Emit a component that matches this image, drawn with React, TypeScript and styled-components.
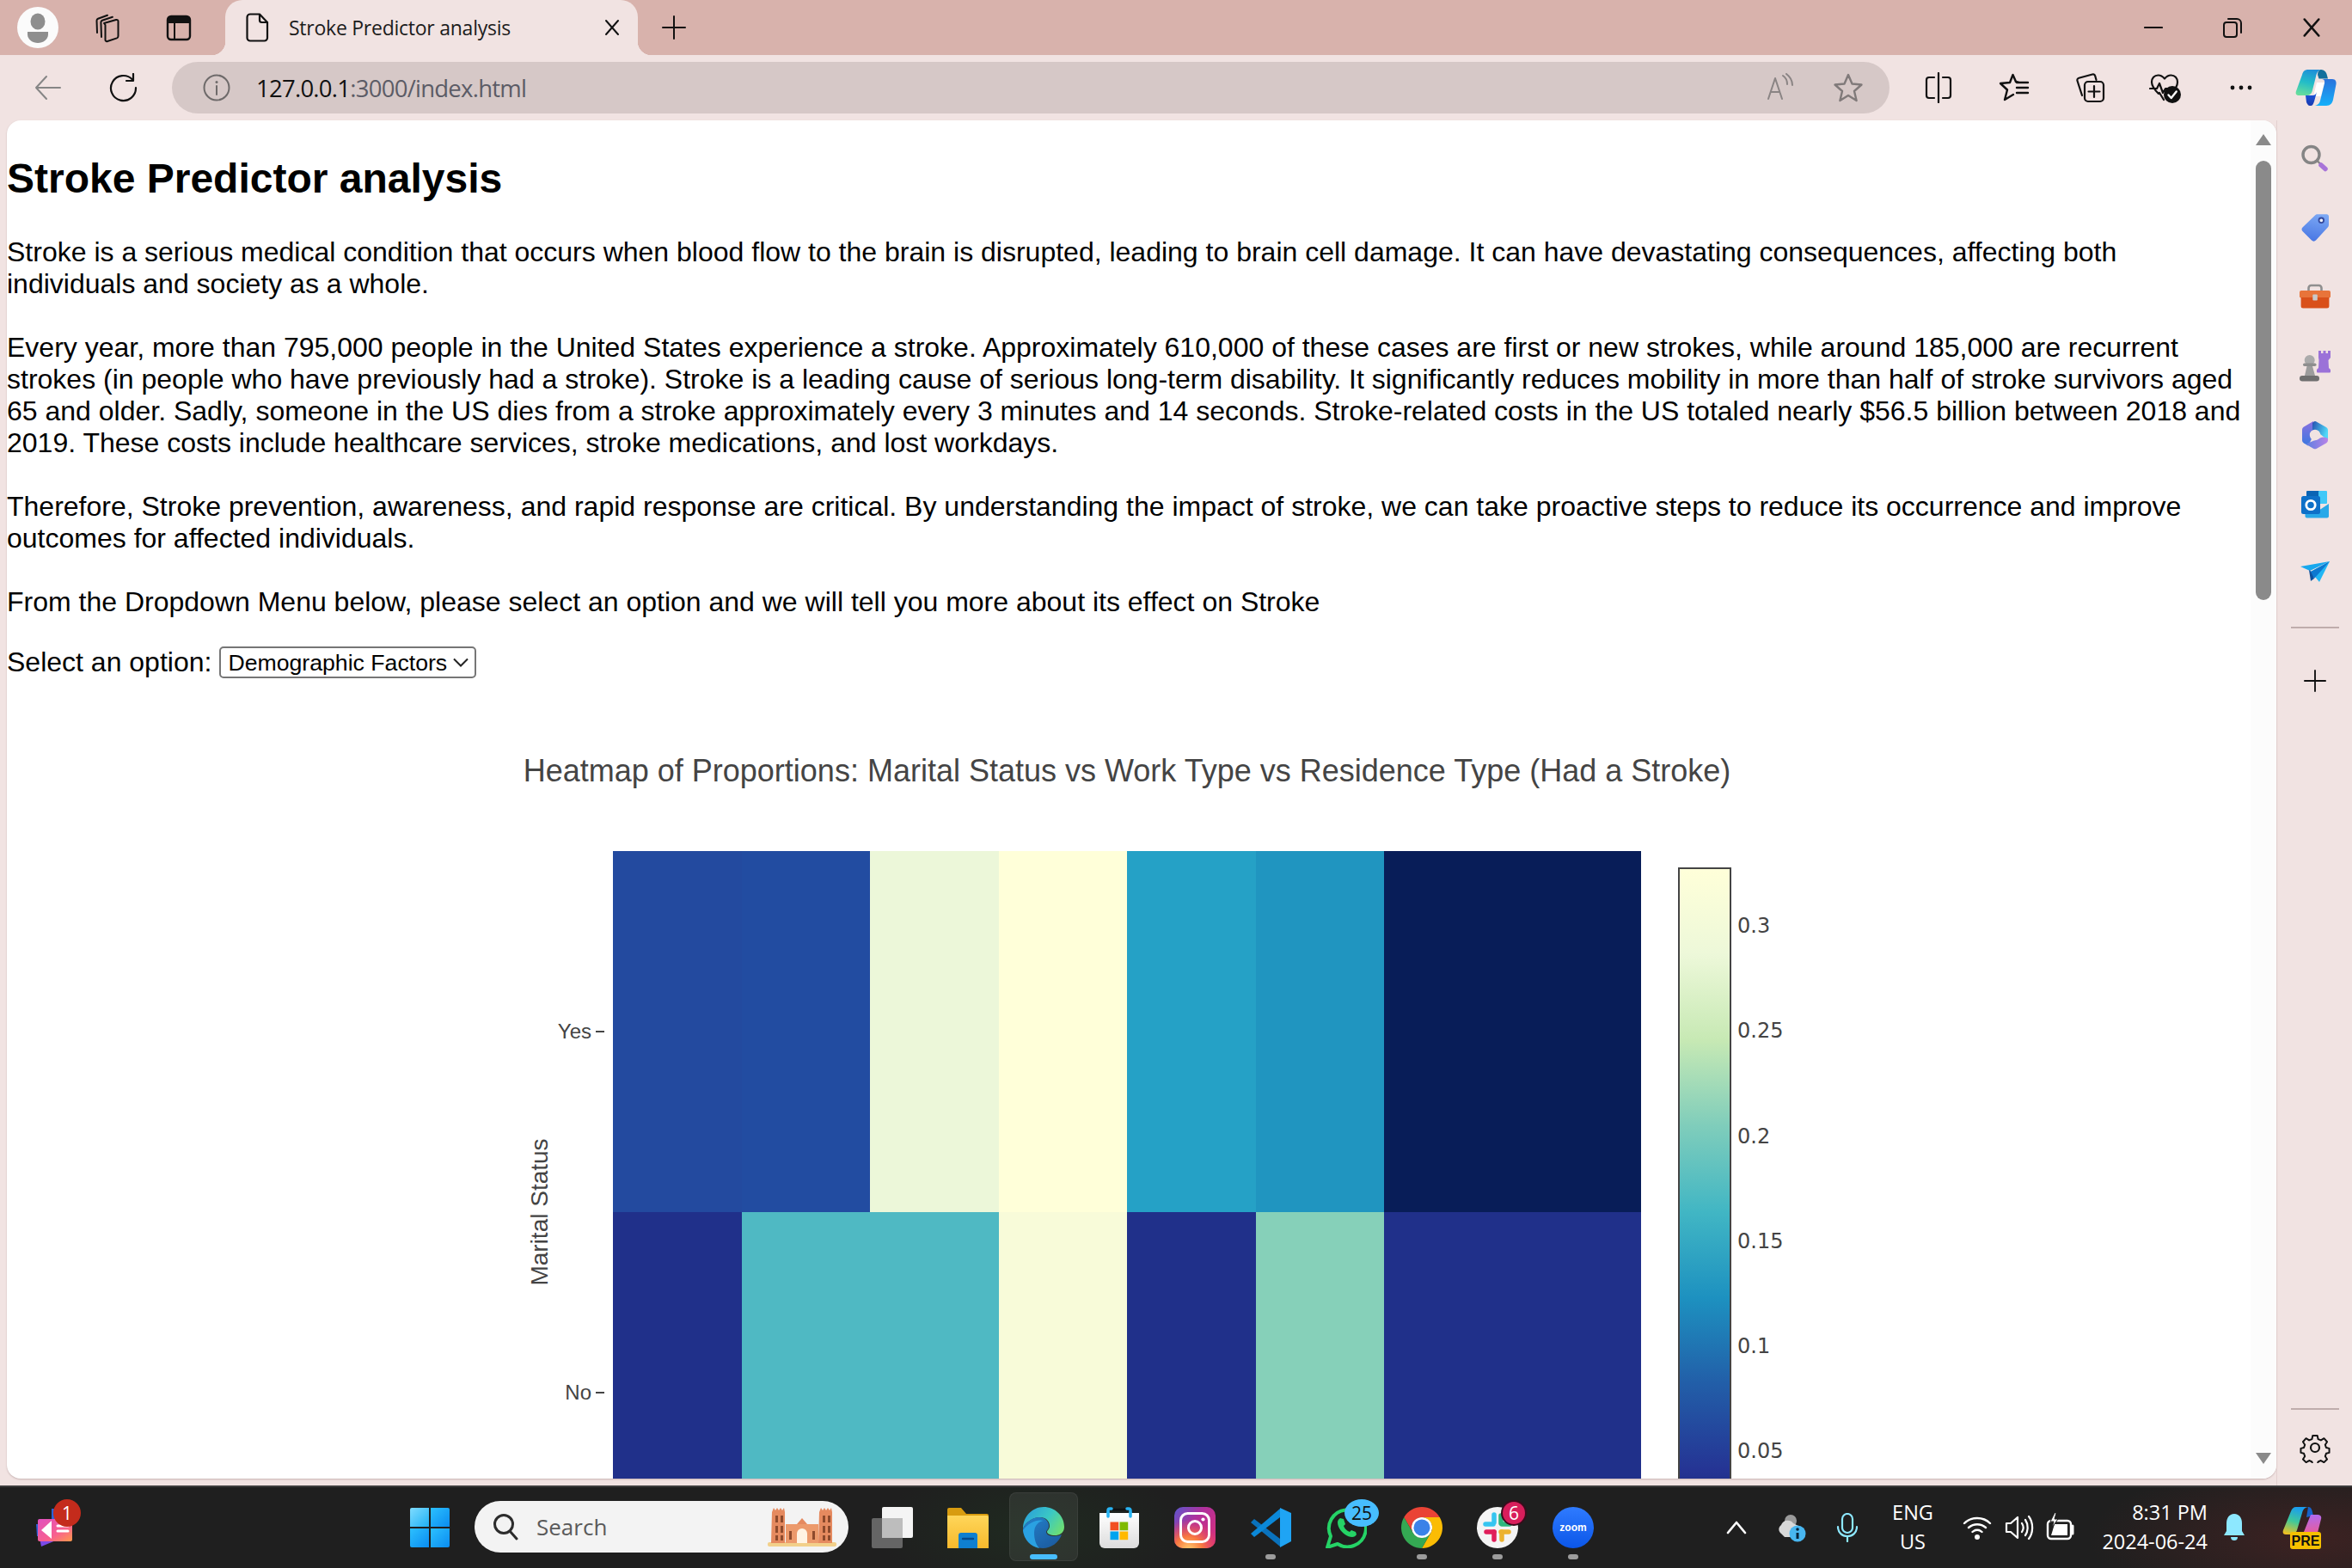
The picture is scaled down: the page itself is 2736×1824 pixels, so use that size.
import React from "react";
import styled, { createGlobalStyle } from "styled-components";

const Global = createGlobalStyle`
  html, body { margin: 0; padding: 0; overflow: hidden; background: #f1e3e2; }
  body { font-family: "Liberation Sans", Arial, sans-serif; }
  * { box-sizing: border-box; }
`;

const UI_FONT = `"Open Sans", "Noto Sans", sans-serif`;
const CHEVRON = `url("data:image/svg+xml,%3Csvg xmlns='http://www.w3.org/2000/svg' width='18' height='11' viewBox='0 0 18 11'%3E%3Cpath d='M1 1.500l8 8 8-8' fill='none' stroke='%23222' stroke-width='2'/%3E%3C/svg%3E")`;

const Shell = styled.div`
  width: 2736px; height: 1824px; display: flex; flex-direction: column; overflow: hidden; background: #f1e3e2;
`;
const TitleBar = styled.header`
  height: 64px; flex: none; display: flex; align-items: center; background: #d8b2ac;
`;
const Slot = styled.div<{ $w: number; $ml?: number }>`
  width: ${(p) => p.$w}px; margin-left: ${(p) => p.$ml ?? 0}px; flex: none; height: 100%;
  display: flex; align-items: center; justify-content: center; position: relative;
`;
const Tab = styled.div`
  width: 480px; height: 64px; margin-left: 6px; flex: none; display: flex; align-items: center;
  padding: 0 20px 0 21px; background: #f1e3e2; border-radius: 20px 20px 0 0; position: relative;
  &::before, &::after { content: ""; position: absolute; bottom: 0; width: 16px; height: 16px; }
  &::before { left: -16px; background: radial-gradient(circle at 0 0, transparent 16px, #f1e3e2 16.5px); }
  &::after { right: -16px; background: radial-gradient(circle at 100% 0, transparent 16px, #f1e3e2 16.5px); }
`;
const TabTitle = styled.span`
  font: 400 23px ${UI_FONT}; color: #1c1c1c; margin-left: 19px; white-space: nowrap; flex: 1; letter-spacing: -0.25px;
`;
const WindowControls = styled.div`
  margin-left: auto; display: flex; height: 100%; padding-right: 1px;
`;
const Toolbar = styled.nav`
  height: 76px; flex: none; display: flex; align-items: center; padding-left: 12px; background: #f1e3e2;
`;
const AddressBar = styled.div`
  flex: 1; height: 60px; margin: 0 13px 0 12px; border-radius: 30px; background: #d6c8c7;
  display: flex; align-items: center; padding-left: 35px; padding-right: 9px;
`;
const Url = styled.div`
  font: 400 27.5px ${UI_FONT}; color: #5c5c66; margin-left: 29px; flex: 1; white-space: nowrap; letter-spacing: -0.75px;
`;
const UrlHost = styled.span` color: #111; `;
const Main = styled.div`
  flex: 1; min-height: 0; display: flex;
`;
const Card = styled.main`
  flex: 1; min-width: 0; margin: 0 0 8px 8px; display: flex; overflow: hidden; background: #fff;
  border-radius: 16px; box-shadow: 0 1px 2px rgba(120, 90, 90, 0.35);
`;
const Page = styled.div`
  flex: 1; min-width: 0; overflow: hidden; color: #000; font: 400 32px/37px "Liberation Sans", Arial, sans-serif;
`;
const Heading = styled.h2`
  margin: 40px 0; font: 700 48px/55px "Liberation Sans", Arial, sans-serif;
`;
const Para = styled.p<{ $mb?: number }>`
  margin: 0 0 ${(p) => p.$mb ?? 37}px;
`;
const SelectRow = styled.div`
  display: flex; align-items: center; height: 37px;
`;
const Dropdown = styled.select`
  appearance: none; margin-left: 9px; width: 299px; height: 37px; font: 400 26.67px "Liberation Sans", Arial, sans-serif;
  color: #000; background: #fff ${CHEVRON} no-repeat right 7px center; border: 2px solid #767676; border-radius: 5px;
  padding: 0 0 0 8px;
`;
const Chart = styled.svg`
  display: block; margin-top: 11px;
`;
const Rail = styled.aside`
  width: 30px; flex: none; background: #fcfcfc; display: flex; flex-direction: column;
  padding: 16px 6px 17px;
`;
const Thumb = styled.div`
  height: 511px; margin-top: 18px; border-radius: 9px; background: #8a8a8a; flex: none;
`;
const RailArrow = styled.svg<{ $end?: boolean }>`
  display: block; flex: none; margin-top: ${(p) => (p.$end ? "auto" : "0")};
`;
const Sidebar = styled.aside`
  width: 88px; flex: none; display: flex; flex-direction: column; align-items: center; padding: 4px 0 4px;
  border-left: 1px solid #e2d0cf;
`;
const SideSlot = styled.div`
  width: 100%; height: 80.5px; flex: none; display: flex; align-items: center; justify-content: center;
`;
const SideRule = styled.div<{ $auto?: boolean }>`
  width: 56px; height: 2px; flex: none; background: #bfadac;
  margin-top: ${(p) => (p.$auto ? "auto" : "21px")}; margin-bottom: ${(p) => (p.$auto ? "4px" : "21px")};
`;
const Taskbar = styled.footer`
  height: 96px; flex: none; display: flex; align-items: stretch; border-top: 2px solid #3c3c3c; color: #fff;
  background:
    radial-gradient(ellipse 260px 90px at 2690px 60px, #3d2222 0%, transparent 100%),
    radial-gradient(ellipse 180px 80px at 1200px 50px, #1f2a20 0%, transparent 100%),
    #1f1f1f;
`;
const SearchPill = styled.div`
  width: 435px; height: 60px; margin: 16px 7px 0 8px; border-radius: 30px; background: #f3f3f3; flex: none;
  display: flex; align-items: center; padding: 0 14px 0 20px;
`;
const SearchLabel = styled.span`
  font: 400 26px ${UI_FONT}; color: #5a5a5a; margin-left: 20px; flex: 1;
`;
const ActiveTile = styled.div`
  position: absolute; left: 0; top: 6px; width: 80px; height: 80px; margin-left: 4px; border-radius: 8px;
  background: rgba(255, 255, 255, 0.07); border: 1px solid rgba(255, 255, 255, 0.06);
`;
const RunDot = styled.div<{ $active?: boolean }>`
  position: absolute; bottom: 10px; left: 50%; transform: translateX(-50%); height: 6px; border-radius: 3px;
  width: ${(p) => (p.$active ? 32 : 12)}px; background: ${(p) => (p.$active ? "#47bdff" : "#9c9c9c")};
`;
const Badge = styled.div<{ $bg: string; $fg: string; $w: number; $h: number; $x: number; $y: number; $halo?: boolean }>`
  position: absolute; left: 50%; top: 50%; width: ${(p) => p.$w}px; height: ${(p) => p.$h}px;
  margin-left: ${(p) => p.$x - p.$w / 2}px; margin-top: ${(p) => p.$y - p.$h / 2}px; border-radius: 50%;
  background: ${(p) => p.$bg}; color: ${(p) => p.$fg}; font: 400 21px ${UI_FONT};
  box-shadow: ${(p) => (p.$halo ? "0 0 0 2px #3a0c1c" : "none")};
  display: flex; align-items: center; justify-content: center;
`;
const Tray = styled.div`
  margin-left: auto; display: flex; padding-right: 8px; flex: none;
`;
const TwoLine = styled.div<{ $align: string; $w: number }>`
  width: ${(p) => p.$w}px; flex: none; display: flex; flex-direction: column; justify-content: center; gap: 5px;
  padding-bottom: 2px; align-items: ${(p) => p.$align}; font: 400 23.5px/29px ${UI_FONT}; color: #fff; white-space: nowrap;
`;

const Svg = ({ s = 32, vb = 32, children }: { s?: number; vb?: number; children: React.ReactNode }) => (
  <svg width={s} height={s} viewBox={`0 0 ${vb} ${vb}`} fill="none" strokeLinecap="round" strokeLinejoin="round">{children}</svg>
);

/* chrome icons */
const Profile = () => (
  <Svg s={48} vb={48}>
    <circle cx="24" cy="24" r="24" fill="#fbfbfb" />
    <ellipse cx="24" cy="17" rx="8.5" ry="9.5" fill="#8e8e8e" />
    <path d="M12 29h24v3c0 6-6 10-12 10s-12-4-12-10z" fill="#8e8e8e" />
  </Svg>
);
const Workspaces = () => (
  <Svg s={36} vb={36}>
    <g stroke="#111" strokeWidth="2">
      <path d="M15 13l14-4c1.500-.4 2.500.4 2.500 1.800V28c0 1.200-.5 2-1.600 2.400L19 34c-1.500.5-2.500-.4-2.500-1.800V15z" />
      <path d="M12 29l-.6-17c0-1 .5-1.800 1.500-2.200l12-4" />
      <path d="M7 24l-.5-14c0-1 .5-1.800 1.500-2.200l11-4" />
    </g>
  </Svg>
);
const TabActions = () => (
  <Svg s={32} vb={32}>
    <rect x="3" y="3" width="26" height="27" rx="4" stroke="#111" strokeWidth="2.4" />
    <path d="M3 7a4 4 0 0 1 4-4h18a4 4 0 0 1 4 4v4H3z" fill="#111" />
    <path d="M11 11v19" stroke="#111" strokeWidth="2" />
  </Svg>
);
const Doc = () => (
  <Svg s={34} vb={34}>
    <path d="M8 1.500h11l9 9.500v18a3.500 3.500 0 0 1-3.500 3.500h-16.500A3.500 3.500 0 0 1 4.500 29V5A3.500 3.500 0 0 1 8 1.500z" stroke="#111" strokeWidth="2.2" />
    <path d="M19 2v6.500a2.500 2.500 0 0 0 2.500 2.500H28" stroke="#111" strokeWidth="2.2" />
  </Svg>
);
const CloseX = ({ s = 20 }: { s?: number }) => (
  <Svg s={s} vb={20}>
    <path d="M3 2l14 16M17 2L3 18" stroke="#111" strokeWidth="2" />
  </Svg>
);
const Plus = ({ s = 28, c = "#111" }: { s?: number; c?: string }) => (
  <Svg s={s} vb={28}>
    <path d="M14 1v26M1 14h26" stroke={c} strokeWidth="2" />
  </Svg>
);
const Minimize = () => (
  <Svg s={22} vb={22}><path d="M1 11h20" stroke="#111" strokeWidth="2.200" /></Svg>
);
const Restore = () => (
  <Svg s={24} vb={24}>
    <rect x="2" y="6" width="15" height="17" rx="3" stroke="#111" strokeWidth="2" />
    <path d="M7 2h10a5 5 0 0 1 5 5v11" stroke="#111" strokeWidth="2" />
  </Svg>
);
const Back = () => (
  <Svg s={34} vb={34}>
    <path d="M31 17H3M15 4L3 17l12 13" stroke="#868686" strokeWidth="2" />
  </Svg>
);
const Refresh = () => (
  <Svg s={34} vb={34}>
    <path d="M27 7.500A14.500 14.500 0 1 0 31 17" stroke="#111" strokeWidth="2.200" />
    <path d="M28 1v8h-8" stroke="#111" strokeWidth="2.200" />
  </Svg>
);
const Info = () => (
  <Svg s={34} vb={34}>
    <circle cx="17" cy="17" r="14.500" stroke="#6e6a6a" strokeWidth="2" />
    <circle cx="17" cy="10.500" r="1.500" fill="#6e6a6a" />
    <path d="M17 15v10" stroke="#6e6a6a" strokeWidth="2" />
  </Svg>
);
const ReadAloud = () => (
  <Svg s={34} vb={34}>
    <g stroke="#8a8484" strokeWidth="2">
      <path d="M3 30L11 6l8 24M6 22h10" />
      <path d="M20 3c3 2 5 6 5 10M24 1c4 3 7 8 7 13" />
    </g>
  </Svg>
);
const Star = () => (
  <Svg s={36} vb={36}>
    <path d="M18 3l4.500 10.500 11 1-8.500 7.500 2.600 11L18 27l-9.600 6 2.600-11-8.500-7.500 11-1z" stroke="#807a7a" strokeWidth="2.400" />
  </Svg>
);
const Split = () => (
  <Svg s={36} vb={36}>
    <g stroke="#111" strokeWidth="2.200">
      <path d="M13 6H7a3 3 0 0 0-3 3v18a3 3 0 0 0 3 3h6" />
      <path d="M23 6h6a3 3 0 0 1 3 3v18a3 3 0 0 1-3 3h-6" />
      <path d="M18 1v34" />
    </g>
  </Svg>
);
const Favorites = () => (
  <Svg s={36} vb={36}>
    <g stroke="#111" strokeWidth="2.400">
      <path d="M20 11l-3.500-8L13 12 2 13l8 7.500L7 32l10-6" />
      <path d="M20 11l4 1M21 18h13M21 12h13M21 24h13" />
    </g>
  </Svg>
);
const Collections = () => (
  <Svg s={36} vb={36}>
    <g stroke="#111" strokeWidth="2.200">
      <path d="M9 27L3.500 10c-.5-1.500.3-2.800 1.800-3.200L21 2.500c1.500-.4 2.800.3 3.200 1.800L25.500 9" />
      <rect x="12" y="11" width="22" height="23" rx="4" fill="#f1e3e2" />
      <path d="M23 16v13M16.500 22.500h13" />
    </g>
  </Svg>
);
const Health = () => (
  <Svg s={38} vb={38}>
    <path d="M11 26C6 21 3 17 3 12.500 3 8 6 4.500 10.500 4.500c3 0 5.500 1.600 7.500 4 2-2.400 4.500-4 7.500-4C30 4.500 33 8 33 12.500c0 2-.6 4-1.700 6" stroke="#111" strokeWidth="2.200" />
    <path d="M1 20h8l3-6 4 11 3-5 3 0M12 25l5 8" stroke="#111" strokeWidth="2.200" />
    <circle cx="27" cy="27" r="10" fill="#111" />
    <path d="M22.500 27.500l3.200 3.500 6-7.500" stroke="#fff" strokeWidth="2.400" />
  </Svg>
);
const Dots = () => (
  <Svg s={28} vb={28}>
    <circle cx="4" cy="14" r="2.400" fill="#111" /><circle cx="14" cy="14" r="2.400" fill="#111" /><circle cx="24" cy="14" r="2.400" fill="#111" />
  </Svg>
);
const CopilotEdge = () => (
  <Svg s={48} vb={48}>
    <defs>
      <linearGradient id="cpA" x1="0.6" y1="0" x2="0.35" y2="1"><stop offset="0" stopColor="#1e8fd8" /><stop offset="0.5" stopColor="#22bcc8" /><stop offset="1" stopColor="#66dd9c" /></linearGradient>
      <linearGradient id="cpB" x1="0.5" y1="0" x2="0.5" y2="1"><stop offset="0" stopColor="#2a72dc" /><stop offset="1" stopColor="#14b0fa" /></linearGradient>
      <linearGradient id="cpC" x1="0.5" y1="0" x2="0.5" y2="1"><stop offset="0" stopColor="#1a58e0" /><stop offset="1" stopColor="#1a3ab0" /></linearGradient>
    </defs>
    <path d="M25 18h9l-4 16h-9z" fill="#fff" />
    <path d="M29 3c3 0 6 1 7.500 5L38 13.500H27.500L26 9c0-3 1-5 3-6z" fill="#126f9c" />
    <path d="M12 33h8c2 0 4-1 5-4l-3 11c-1 3-2 5-4 5h-1c-2 0-3-2-4-4z" fill="url(#cpC)" />
    <path d="M15 3h15c-4 1-5 4-6 8l-4 16c-1 4-3 6-7 6H5c-4 0-5-2-4-5L8 9c1-4 3-6 7-6z" fill="url(#cpA)" />
    <path d="M31 14h12c4 0 5 3 4.500 6L44 38c-1 4-3 7-8 7H21c4 0 7-2 8-6l5-20c.5-2 0-5-3-5z" fill="url(#cpB)" />
  </Svg>
);

/* sidebar icons */
const SideSearch = () => (
  <Svg s={36} vb={36}>
    <circle cx="13.500" cy="14" r="9.500" stroke="#858585" strokeWidth="3.400" />
    <path d="M20.500 21l3 3" stroke="#858585" strokeWidth="2.400" />
    <path d="M25 26l5 4.500" stroke="#a874d8" strokeWidth="5.500" />
  </Svg>
);
const SideTag = () => (
  <Svg s={36} vb={36}>
    <defs><linearGradient id="tagG" x1="0.5" y1="1" x2="0.7" y2="0"><stop offset="0" stopColor="#4a78e4" /><stop offset="1" stopColor="#7ca8f4" /></linearGradient></defs>
    <path d="M3.500 17.500L18 3.500c.8-.8 1.700-1.300 3-1.300h10.500c1.500 0 2.500 1 2.500 2.500V14.500c0 1.200-.4 2.200-1.200 3L19 32.500c-1.500 1.500-3.500 1.500-5 0L3.500 22c-1.300-1.300-1.300-3.200 0-4.500z" fill="url(#tagG)" />
    <circle cx="25.300" cy="9.300" r="2.800" fill="#eef2fc" stroke="#34489c" strokeWidth="1.800" />
  </Svg>
);
const SideCase = () => (
  <Svg s={36} vb={36}>
    <path d="M10.500 12V8a3 3 0 0 1 3-3h9a3 3 0 0 1 3 3v4" stroke="#8f8f8f" strokeWidth="2.600" />
    <path d="M0 13a2 2 0 0 1 2-2h32a2 2 0 0 1 2 2v5.500l-1.500 1H1.500L0 18.500z" fill="#e8743a" />
    <path d="M1.600 19h32.800v10a2.500 2.500 0 0 1-2.500 2.500H4.100A2.500 2.500 0 0 1 1.600 29z" fill="#d9501a" />
    <rect x="15.300" y="15.500" width="5.500" height="7" rx="1" fill="#c9c9c9" />
  </Svg>
);
const SideChess = () => (
  <Svg s={38} vb={38}>
    <path d="M23 1h3v3h2.500V1h3v3H34V1h3v8l-2.500 3 .5 9 2 2v2.500a1 1 0 0 1-1 1H22a1 1 0 0 1-1-1V23l2-2 .5-9L23 9z" fill="#9b72d8" />
    <circle cx="12.700" cy="12" r="6" fill="#ababab" />
    <rect x="5" y="15.500" width="15.500" height="3.500" rx="1.700" fill="#8e8e8e" />
    <path d="M9.500 19h6.500l3 11H7z" fill="#9c9c9c" />
    <rect x="1" y="30" width="23" height="6.500" rx="3.200" fill="#6f6f6f" />
  </Svg>
);
const SideM365 = () => (
  <Svg s={36} vb={36}>
    <defs>
      <linearGradient id="msA" x1="0.5" y1="0" x2="0.5" y2="1"><stop offset="0" stopColor="#8a70e0" /><stop offset="1" stopColor="#3a78e0" /></linearGradient>
      <linearGradient id="msB" x1="0" y1="0" x2="1" y2="0.4"><stop offset="0" stopColor="#2450b0" /><stop offset="1" stopColor="#50d8f8" /></linearGradient>
      <linearGradient id="msC" x1="0" y1="0" x2="1" y2="0"><stop offset="0" stopColor="#5a7fe0" /><stop offset="1" stopColor="#b883e8" /></linearGradient>
    </defs>
    <path d="M16 2L5 8.500C3.700 9.300 3 10.500 3 12v12c0 1.500.7 2.700 2 3.500l5 3 6-12V2z" fill="url(#msA)" />
    <path d="M15 4l2-1.700a2 2 0 0 1 2 0l12 6.700c1.300.8 2 2 2 3.500V24l-9-7-9-5z" fill="url(#msB)" />
    <path d="M33 22v2c0 1.500-.7 2.700-2 3.500L20 33.800c-1.300.7-2.700.7-4 0L7 28.500l10-4 7-3c3-1.500 6-1 9 .5z" fill="url(#msC)" />
    <circle cx="18" cy="18" r="6.200" fill="#f1e3e2" />
  </Svg>
);
const SideOutlook = () => (
  <Svg s={36} vb={36}>
    <rect x="8" y="2" width="16" height="15" rx="1" fill="#0a64b4" />
    <rect x="22" y="2" width="10" height="15" rx="1" fill="#3fc8f8" />
    <rect x="8" y="15" width="14" height="10" fill="#1590d8" />
    <path d="M6.500 19l14 7 13.500-9v14.500c0 1-1 2-2 2H8.500c-1 0-2-1-2-2z" fill="#28a8e8" />
    <rect x="2" y="8" width="22" height="21" rx="2.500" fill="#0e70c8" />
    <circle cx="13" cy="18.500" r="5.200" stroke="#fff" strokeWidth="2.800" />
  </Svg>
);
const SideSend = () => (
  <Svg s={36} vb={36}>
    <path d="M1 10l34-6-23 11z" fill="#18a8ee" />
    <path d="M35 4L23 28 13 16z" fill="#21b6f4" />
    <path d="M11 14l4 3 2 7-4 3z" fill="#0d4f9c" />
    <path d="M35 4L13 16l4 8z" fill="#0c78d0" />
  </Svg>
);
const Gear = () => (
  <Svg s={36} vb={36}>
    <path d="M15 2.500h6l1 4.500 3.600 1.500 4-2.500 4 4.500-2.500 3.800 1.300 3.700 4 1v5.500l-4 1-1.300 3.700 2.500 3.800-4 4-4-2.300-3.600 1.500-1 4.300h-6l-1-4.300-3.600-1.500-4 2.300-4-4 2.500-3.800-1.300-3.700-4-1v-5.500l4-1 1.300-3.700L2.400 10.500l4-4.500 4 2.500L14 7z" stroke="#111" strokeWidth="2.200" transform="translate(1.800 1.800) scale(.9)" />
    <circle cx="18" cy="18" r="5" stroke="#111" strokeWidth="2.200" />
  </Svg>
);

/* taskbar icons */
const Widget = () => (
  <Svg s={48} vb={48}>
    <defs><linearGradient id="wg" x1="0" y1="0" x2="1" y2="1"><stop offset="0" stopColor="#e050c0" /><stop offset="0.6" stopColor="#f85f90" /><stop offset="1" stopColor="#ff9a4a" /></linearGradient></defs>
    <path d="M20 2h16v12H20z" fill="#2a62d8" />
    <path d="M2 20l6 0v14H3z" fill="#2a62d8" />
    <path d="M6 36h26L8 46z" fill="#7a4ae8" />
    <rect x="4" y="14" width="40" height="26" rx="2" fill="url(#wg)" />
    <path d="M8 27l12-11v21z" fill="#fff" />
    <path d="M27 22h12M27 28h12" stroke="#fff" strokeWidth="3" />
  </Svg>
);
const WinLogo = () => (
  <Svg s={46} vb={46}>
    <defs>
      <linearGradient id="win1" x1="0" y1="0" x2="1" y2="1"><stop offset="0" stopColor="#7fdcff" /><stop offset="1" stopColor="#1fb0f5" /></linearGradient>
      <linearGradient id="win2" x1="0" y1="0" x2="1" y2="1"><stop offset="0" stopColor="#2cc0ff" /><stop offset="1" stopColor="#0a8cf0" /></linearGradient>
    </defs>
    <path d="M2 0h20v22H0V2a2 2 0 0 1 2-2z" fill="url(#win1)" />
    <path d="M24 0h20a2 2 0 0 1 2 2v20H24z" fill="url(#win2)" />
    <path d="M0 24h22v22H2a2 2 0 0 1-2-2z" fill="url(#win2)" />
    <path d="M24 24h22v20a2 2 0 0 1-2 2H24z" fill="url(#win2)" />
  </Svg>
);
const Magnifier = () => (
  <Svg s={32} vb={32}>
    <circle cx="14" cy="13" r="10.500" stroke="#2c2c2c" strokeWidth="3" />
    <path d="M21 21l8 9" stroke="#2c2c2c" strokeWidth="3" />
  </Svg>
);
const Building = () => (
  <svg width="80" height="46" viewBox="0 0 80 46">
    <rect x="0" y="41" width="80" height="5" rx="2" fill="#f2d08a" />
    <path d="M5 6l2-5 2 3 2-3 2 3 2-3 2 3 2-3 1 5v36H4z" fill="#e58a5f" />
    <path d="M60 6l2-5 2 3 2-3 2 3 2-3 2 3 2-3 1 5v36H59z" fill="#e58a5f" />
    <path d="M21 20h38v22H21z" fill="#ec9a6c" />
    <path d="M34 20l6-7 6 7z" fill="#e58a5f" />
    <path d="M34 42V31a6 6 0 0 1 12 0v11z" fill="#fff4e4" />
    <g fill="#8d4a2c">
      <rect x="9" y="10" width="3" height="8" /><rect x="15" y="10" width="3" height="8" />
      <rect x="9" y="22" width="3" height="8" /><rect x="15" y="22" width="3" height="8" />
      <rect x="9" y="33" width="3" height="6" /><rect x="15" y="33" width="3" height="6" />
      <rect x="64" y="10" width="3" height="8" /><rect x="70" y="10" width="3" height="8" />
      <rect x="64" y="22" width="3" height="8" /><rect x="70" y="22" width="3" height="8" />
      <rect x="64" y="33" width="3" height="6" /><rect x="70" y="33" width="3" height="6" />
      <rect x="25" y="28" width="3" height="10" /><rect x="52" y="28" width="3" height="10" />
    </g>
  </svg>
);
const TaskView = () => (
  <Svg s={48} vb={48}>
    <rect x="12" y="0" width="36" height="36" rx="2" fill="#f4f4f4" />
    <rect x="0" y="13" width="36" height="35" rx="2" fill="#6b6b6b" fillOpacity="0.92" />
    <rect x="12" y="13" width="24" height="23" fill="#bdbdbd" />
  </Svg>
);
const Folder = () => (
  <Svg s={48} vb={48}>
    <defs><linearGradient id="fo" x1="0" y1="0" x2="0" y2="1"><stop offset="0" stopColor="#ffd65a" /><stop offset="1" stopColor="#f7b92c" /></linearGradient></defs>
    <path d="M0 3a2 2 0 0 1 2-2h14l6 7h24a2 2 0 0 1 2 2v36H0z" fill="#d89c10" />
    <path d="M0 10h46a2 2 0 0 1 2 2v36H0z" fill="url(#fo)" />
    <path d="M13 33a3 3 0 0 1 3-3h16a3 3 0 0 1 3 3v15H13z" fill="#0f7fd0" />
    <path d="M18 37h12" stroke="#064a8c" strokeWidth="2.400" />
  </Svg>
);
const EdgeLogo = () => (
  <Svg s={48} vb={48}>
    <defs>
      <linearGradient id="edA" x1="0" y1="0.2" x2="1" y2="0.7"><stop offset="0" stopColor="#1a98d8" /><stop offset="0.55" stopColor="#2cc4c0" /><stop offset="1" stopColor="#62dc6a" /></linearGradient>
      <linearGradient id="edB" x1="0" y1="0" x2="0.8" y2="1"><stop offset="0" stopColor="#1478c8" /><stop offset="1" stopColor="#0a4f98" /></linearGradient>
    </defs>
    <path d="M24 0c13 0 24 10 24 23 0 7-5 10-11 10-5 0-9-2-9-4 0-2 3-3 3-7 0-6-5-10-11-10C11 12 3 18 0 25 0 11 11 0 24 0z" fill="url(#edA)" />
    <path d="M0 25c3-7 11-13 19-13 6 0 11 4 11 10 0 4-3 5-3 7 0 3 4 5 9 5 4 0 7-1 9-2-3 9-12 16-22 16C11 48 0 37 0 25z" fill="url(#edB)" />
    <path d="M13 30c0-7 4-13 11-14-8-2-17 2-24 11 1 11 9 19 19 21-4-4-6-11-6-18z" fill="#1a9ae0" />
  </Svg>
);
const StoreBag = () => (
  <Svg s={48} vb={48}>
    <defs><linearGradient id="bag" x1="0" y1="0" x2="0" y2="1"><stop offset="0" stopColor="#ffffff" /><stop offset="1" stopColor="#dcdcdc" /></linearGradient></defs>
    <path d="M11 3h26" stroke="#111" strokeWidth="2.500" />
    <path d="M11 11V4a2 2 0 0 1 2-2h2M37 11V4a2 2 0 0 0-2-2h-2" stroke="#27b4f4" strokeWidth="3.500" />
    <path d="M1 7h46v35a6 6 0 0 1-6 6H7a6 6 0 0 1-6-6z" fill="url(#bag)" />
    <path d="M11 11V7M37 11V7" stroke="#27b4f4" strokeWidth="3.500" />
    <rect x="13.500" y="17.500" width="9.700" height="9.700" fill="#f25022" /><rect x="24.500" y="17.500" width="9.700" height="9.700" fill="#7fba00" />
    <rect x="13.500" y="28.500" width="9.700" height="9.700" fill="#00a4ef" /><rect x="24.500" y="28.500" width="9.700" height="9.700" fill="#ffb900" />
  </Svg>
);
const Instagram = () => (
  <Svg s={48} vb={48}>
    <defs>
      <linearGradient id="ig" x1="0" y1="0" x2="1" y2="0.8"><stop offset="0" stopColor="#5a58d0" /><stop offset="0.45" stopColor="#b0309c" /><stop offset="1" stopColor="#d8307c" /></linearGradient>
      <radialGradient id="ig2" cx="0.35" cy="1.05" r="0.75"><stop offset="0" stopColor="#ffd070" /><stop offset="0.45" stopColor="#f87840" /><stop offset="1" stopColor="#f04a5a" stopOpacity="0" /></radialGradient>
    </defs>
    <rect x="0" y="0" width="48" height="48" rx="10" fill="url(#ig)" />
    <rect x="0" y="0" width="48" height="48" rx="10" fill="url(#ig2)" />
    <rect x="7.500" y="7.500" width="33" height="33" rx="8" stroke="#fff" strokeWidth="3" />
    <circle cx="24" cy="24" r="7.500" stroke="#fff" strokeWidth="3" />
    <circle cx="33.500" cy="14.500" r="2.100" fill="#fff" />
  </Svg>
);
const VSCode = () => (
  <Svg s={50} vb={50}>
    <path d="M2 19l4-4 30 23v9z" fill="#0a72bc" />
    <path d="M36 3v10L6 36l-4-4z" fill="#0b88d8" />
    <path d="M36 2l13 6v33l-13 7z" fill="#1fa4f4" />
  </Svg>
);
const WhatsApp = () => (
  <Svg s={48} vb={48}>
    <path d="M2 47l4-13A21.500 21.500 0 1 1 14 43z" stroke="#25d366" strokeWidth="4" />
    <path d="M17 13c-2 1-3 3-3 5 0 8 9 17 17 17 2 0 4-1 5-3l-1-3-5-2-2 2c-3-1-6-4-7-7l2-2-2-6z" fill="#25d366" />
  </Svg>
);
const Chrome = () => (
  <Svg s={48} vb={48}>
    <g transform="translate(24 24) scale(1.09) translate(-24 -24)">
      <path d="M4.950 13A22 22 0 0 1 43.050 13H24a11 11 0 0 0-9.500 16.500z" fill="#ea4335" />
      <path d="M43.050 13A22 22 0 0 1 24 46L33.500 29.500A11 11 0 0 0 24 13z" fill="#fbbc04" />
      <path d="M24 46A22 22 0 0 1 4.950 13L14.500 29.500A11 11 0 0 0 33.500 29.500z" fill="#34a853" />
    </g>
    <circle cx="24" cy="24" r="12" fill="#fff" />
    <circle cx="24" cy="24" r="9.500" fill="#3b82e8" />
  </Svg>
);
const Slack = () => (
  <Svg s={48} vb={48}>
    <circle cx="24" cy="24" r="24" fill="#f4f4f4" />
    <g strokeWidth="5.500">
      <path d="M20 9v9" stroke="#36c5f0" /><path d="M10 20h9" stroke="#36c5f0" />
      <path d="M28 10v9" stroke="#2eb67d" /><path d="M29 20h9" stroke="#2eb67d" />
      <path d="M28 29h9" stroke="#ecb22e" /><path d="M29 38v-9" stroke="#ecb22e" />
      <path d="M20 29v9" stroke="#e01e5a" /><path d="M11 29h9" stroke="#e01e5a" />
    </g>
  </Svg>
);
const ZoomLogo = () => (
  <Svg s={48} vb={48}>
    <defs><linearGradient id="zm" x1="0" y1="0" x2="0" y2="1"><stop offset="0" stopColor="#2f7bff" /><stop offset="1" stopColor="#0b56e8" /></linearGradient></defs>
    <circle cx="24" cy="24" r="24" fill="url(#zm)" />
    <text x="24" y="28" textAnchor="middle" fill="#fff" style={{ font: "700 12px 'Liberation Sans', sans-serif" }}>zoom</text>
  </Svg>
);
const Chevron = () => (
  <Svg s={24} vb={24}><path d="M2 18L12 6l10 12" stroke="#fff" strokeWidth="2.600" /></Svg>
);
const OneDrive = () => (
  <Svg s={34} vb={34}>
    <circle cx="15" cy="9" r="7" fill="#9a9a9a" />
    <path d="M4 24a6 6 0 0 1 0-10 8 8 0 0 1 14-2l6 3v9c0 3-1 4-4 4H8z" fill="#d8d8d8" />
    <circle cx="23" cy="24" r="9.500" fill="#48b6f0" />
    <path d="M23 23v7" stroke="#06243c" strokeWidth="3" strokeLinecap="butt" />
    <circle cx="23" cy="19" r="1.800" fill="#06243c" />
  </Svg>
);
const Mic = () => (
  <Svg s={34} vb={34}>
    <rect x="11" y="1" width="12" height="22" rx="6" stroke="#8de8ff" strokeWidth="2.200" />
    <path d="M6 16c0 7 5 11 11 11s11-4 11-11M17 27v6" stroke="#8de8ff" strokeWidth="2.200" />
  </Svg>
);
const Wifi = () => (
  <Svg s={34} vb={34}>
    <g stroke="#fff" strokeWidth="2.400">
      <path d="M2 12c8-8 22-8 30 0M7 17c6-5 14-5 20 0M11.500 22c3-3 8-3 11 0" />
    </g>
    <circle cx="17" cy="28" r="3" fill="#fff" />
  </Svg>
);
const Volume = () => (
  <Svg s={34} vb={34}>
    <g stroke="#fff" strokeWidth="2.200">
      <path d="M2 12h5l8-7v24l-8-7H2z" />
      <path d="M20 12c2 3 2 7 0 10M24 8c3.500 5 3.500 13 0 18M28 4c5.500 7 5.500 19 0 26" />
    </g>
  </Svg>
);
const Battery = () => (
  <Svg s={34} vb={34}>
    <rect x="2" y="9" width="27" height="21" rx="4" stroke="#fff" strokeWidth="2.400" />
    <path d="M6 26l4-13h15v13z" fill="#fff" />
    <path d="M31 15v9" stroke="#fff" strokeWidth="3" />
    <path d="M10 0L5 10h4l-2 7 7-10h-4l2-7z" fill="#fff" stroke="#1f1f1f" />
  </Svg>
);
const Bell = () => (
  <Svg s={34} vb={34}>
    <path d="M17 1c-6 0-9 5-9 11v9l-3 5h24l-3-5v-9c0-6-3-11-9-11z" fill="#8de8ff" />
    <path d="M13 28h8c0 3-2 4-4 4s-4-1-4-4z" fill="#8de8ff" />
  </Svg>
);
const CopilotTray = () => (
  <svg width="50" height="50" viewBox="0 0 50 50" fill="none">
    <defs>
      <linearGradient id="ctA" x1="0.5" y1="0" x2="0.2" y2="1"><stop offset="0" stopColor="#1a9cf0" /><stop offset="0.5" stopColor="#3fc89a" /><stop offset="1" stopColor="#f2c020" /></linearGradient>
      <linearGradient id="ctB" x1="0.5" y1="0" x2="0.6" y2="1"><stop offset="0" stopColor="#b06af0" /><stop offset="1" stopColor="#f25a8c" /></linearGradient>
    </defs>
    <path d="M17 1h15c-5 0-7 3-8 7l-6 20c-1 3-3 5-6 5H5c-3 0-4-2-3-5L11 6c1-3 3-5 6-5z" fill="url(#ctA)" />
    <path d="M31 1c3 0 4 2 5 6l1 4-8 2 2-12z" fill="#1763c8" />
    <path d="M34 10h8c3 0 5 2 4 5l-4 16c-1 3-4 5-8 5H18c4 0 7-2 8-6z" fill="url(#ctB)" />
    <rect x="10" y="30" width="36" height="20" rx="3" fill="#f7c000" />
    <text x="28" y="46" textAnchor="middle" fill="#111" style={{ font: "700 16px 'Liberation Sans', sans-serif" }}>PRE</text>
  </svg>
);

/* heatmap data */
const COLS = 8;
const HEAT_X = 713;
const HEAT_W = 1196;
const HEAT_Y = 990;
const ROW_H = 420;
const HEAT = [
  ["#234a9f", "#224ca1", "#ecf7d9", "#ffffd9", "#25a1c6", "#2095c0", "#081d58", "#081d58"],
  ["#20308a", "#4fb9c3", "#4fb9c3", "#f8fbd9", "#20308a", "#86d0b9", "#20308a", "#20308a"],
];
const cellX = (i: number) => Math.round(HEAT_X + (i * HEAT_W) / COLS);
const CB_STOPS = ["#ffffd9", "#edf8d9", "#c7e9b4", "#7fcdbb", "#41b6c4", "#1d91c0", "#225ea8", "#253494", "#081d58"];
const CB_TICKS: [string, number][] = [["0.3", 1076], ["0.25", 1198], ["0.2", 1321], ["0.15", 1443], ["0.1", 1565], ["0.05", 1687]];
const tickFont = { font: "400 24px 'Liberation Sans', sans-serif" };
const barFont = { font: "400 24px 'DejaVu Sans', sans-serif" };

const Heatmap = () => (
  <Chart width={2600} height={1100} viewBox="8 800 2600 1100">
    <defs>
      <linearGradient id="cbar" x1="0" y1="0" x2="0" y2="1">
        {CB_STOPS.map((c, i) => <stop key={c} offset={i / (CB_STOPS.length - 1)} stopColor={c} />)}
      </linearGradient>
    </defs>
    <text x="1311" y="909" textAnchor="middle" fill="#444" style={{ font: "400 36px 'Liberation Sans', sans-serif" }}>
      Heatmap of Proportions: Marital Status vs Work Type vs Residence Type (Had a Stroke)
    </text>
    {HEAT.map((row, r) => row.map((c, i) => (
      <rect key={`${r}-${i}`} x={cellX(i)} y={HEAT_Y + r * ROW_H} width={cellX(i + 1) - cellX(i)} height={ROW_H} fill={c} />
    )))}
    <text x="688" y="1208" textAnchor="end" fill="#444" style={tickFont}>Yes</text>
    <text x="688" y="1628" textAnchor="end" fill="#444" style={tickFont}>No</text>
    <path d="M693 1200h10M693 1620h10" stroke="#444" strokeWidth="2" />
    <text transform="translate(637 1410) rotate(-90)" textAnchor="middle" fill="#444" style={{ font: "400 28px 'Liberation Sans', sans-serif" }}>Marital Status</text>
    <rect x="1953" y="1010" width="60" height="800" fill="url(#cbar)" stroke="#444" strokeWidth="2" />
    {CB_TICKS.map(([t, y]) => (
      <text key={t} x="2021" y={y + 9} fill="#444" style={barFont}>{t}</text>
    ))}
  </Chart>
);

const SIDE = [SideSearch, SideTag, SideCase, SideChess, SideM365, SideOutlook, SideSend];

const App = () => (
  <>
    <Global />
    <Shell>
      <TitleBar>
        <Slot $w={88}><Profile /></Slot>
        <Slot $w={72}><Workspaces /></Slot>
        <Slot $w={96}><TabActions /></Slot>
        <Tab>
          <Doc />
          <TabTitle>Stroke Predictor analysis</TabTitle>
          <CloseX />
        </Tab>
        <Slot $w={84}><Plus /></Slot>
        <WindowControls>
          <Slot $w={92}><Minimize /></Slot>
          <Slot $w={92}><Restore /></Slot>
          <Slot $w={92}><CloseX s={24} /></Slot>
        </WindowControls>
      </TitleBar>
      <Toolbar>
        <Slot $w={88}><Back /></Slot>
        <Slot $w={88}><Refresh /></Slot>
        <AddressBar>
          <Info />
          <Url><UrlHost>127.0.0.1</UrlHost>:3000/index.html</Url>
          <Slot $w={80}><ReadAloud /></Slot>
          <Slot $w={78}><Star /></Slot>
        </AddressBar>
        <Slot $w={88}><Split /></Slot>
        <Slot $w={88}><Favorites /></Slot>
        <Slot $w={88}><Collections /></Slot>
        <Slot $w={88}><Health /></Slot>
        <Slot $w={88}><Dots /></Slot>
        <Slot $w={85}><CopilotEdge /></Slot>
      </Toolbar>
      <Main>
        <Card>
          <Page>
            <Heading>Stroke Predictor analysis</Heading>
            <Para>Stroke is a serious medical condition that occurs when blood flow to the brain is disrupted, leading to brain cell damage. It can have devastating consequences, affecting both individuals and society as a whole.</Para>
            <Para>Every year, more than 795,000 people in the United States experience a stroke. Approximately 610,000 of these cases are first or new strokes, while around 185,000 are recurrent strokes (in people who have previously had a stroke). Stroke is a leading cause of serious long-term disability. It significantly reduces mobility in more than half of stroke survivors aged 65 and older. Sadly, someone in the US dies from a stroke approximately every 3 minutes and 14 seconds. Stroke-related costs in the US totaled nearly $56.5 billion between 2018 and 2019. These costs include healthcare services, stroke medications, and lost workdays.</Para>
            <Para>Therefore, Stroke prevention, awareness, and rapid response are critical. By understanding the impact of stroke, we can take proactive steps to reduce its occurrence and improve outcomes for affected individuals.</Para>
            <Para $mb={33}>From the Dropdown Menu below, please select an option and we will tell you more about its effect on Stroke</Para>
            <SelectRow>
              Select an option:
              <Dropdown defaultValue="Demographic Factors">
                <option>Demographic Factors</option>
                <option>Health Factors</option>
                <option>Lifestyle Factors</option>
              </Dropdown>
            </SelectRow>
            <Heatmap />
          </Page>
          <Rail>
            <RailArrow width="18" height="13" viewBox="0 0 18 13"><path d="M9 0l9 13H0z" fill="#8a8a8a" /></RailArrow>
            <Thumb />
            <RailArrow $end width="18" height="13" viewBox="0 0 18 13"><path d="M9 13L0 0h18z" fill="#8a8a8a" /></RailArrow>
          </Rail>
        </Card>
        <Sidebar>
          {SIDE.map((Icon, i) => <SideSlot key={i}><Icon /></SideSlot>)}
          <SideRule />
          <SideSlot><Plus s={26} /></SideSlot>
          <SideRule $auto />
          <SideSlot><Gear /></SideSlot>
        </Sidebar>
      </Main>
      <Taskbar>
        <Slot $w={128}>
          <Widget />
          <Badge $bg="#c42b1c" $fg="#fff" $w={32} $h={32} $x={14} $y={-17}>1</Badge>
        </Slot>
        <Slot $w={88} $ml={328}><WinLogo /></Slot>
        <SearchPill>
          <Magnifier />
          <SearchLabel>Search</SearchLabel>
          <Building />
        </SearchPill>
        <Slot $w={88}><TaskView /></Slot>
        <Slot $w={88}><Folder /></Slot>
        <Slot $w={88}><ActiveTile /><EdgeLogo /><RunDot $active /></Slot>
        <Slot $w={88}><StoreBag /></Slot>
        <Slot $w={88}><Instagram /></Slot>
        <Slot $w={88}><VSCode /><RunDot /></Slot>
        <Slot $w={88}>
          <WhatsApp />
          <Badge $bg="#47bdff" $fg="#111" $w={40} $h={32} $x={18} $y={-17}>25</Badge>
        </Slot>
        <Slot $w={88}><Chrome /><RunDot /></Slot>
        <Slot $w={88}>
          <Slack /><RunDot />
          <Badge $bg="#d81e5b" $fg="#fff" $w={26} $h={26} $x={19} $y={-17} $halo>6</Badge>
        </Slot>
        <Slot $w={88}><ZoomLogo /><RunDot /></Slot>
        <Tray>
          <Slot $w={64}><Chevron /></Slot>
          <Slot $w={65}><OneDrive /></Slot>
          <Slot $w={64}><Mic /></Slot>
          <TwoLine $align="center" $w={88}><span>ENG</span><span>US</span></TwoLine>
          <Slot $w={62}><Wifi /></Slot>
          <Slot $w={36}><Volume /></Slot>
          <Slot $w={60}><Battery /></Slot>
          <TwoLine $align="flex-end" $w={141}><span>8:31 PM</span><span>2024-06-24</span></TwoLine>
          <Slot $w={62}><Bell /></Slot>
          <Slot $w={98}><CopilotTray /></Slot>
        </Tray>
      </Taskbar>
    </Shell>
  </>
);

export default App;
